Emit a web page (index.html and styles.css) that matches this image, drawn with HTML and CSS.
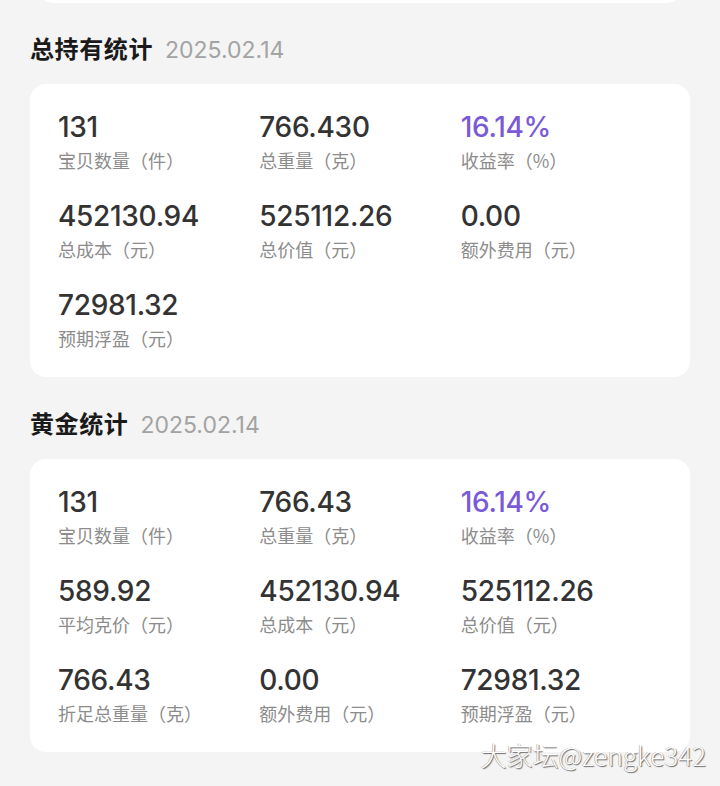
FILE: index.html
```html
<!DOCTYPE html>
<html lang="zh-CN">
<head>
<meta charset="utf-8">
<title>统计</title>
<link rel="stylesheet" href="styles.css">
</head>
<body>
<div class="page">
  <div class="prev-card"></div>

  <section class="section">
    <h2 class="section-title">总持有统计<span class="date">2025.02.14</span></h2>
    <div class="card">
      <div class="grid">
        <div class="cell"><div class="value">131</div><div class="label">宝贝数量（件）</div></div>
        <div class="cell"><div class="value">766.430</div><div class="label">总重量（克）</div></div>
        <div class="cell"><div class="value accent">16.14%</div><div class="label">收益率（%）</div></div>
        <div class="cell"><div class="value">452130.94</div><div class="label">总成本（元）</div></div>
        <div class="cell"><div class="value">525112.26</div><div class="label">总价值（元）</div></div>
        <div class="cell"><div class="value">0.00</div><div class="label">额外费用（元）</div></div>
        <div class="cell"><div class="value">72981.32</div><div class="label">预期浮盈（元）</div></div>
      </div>
    </div>
  </section>

  <section class="section">
    <h2 class="section-title">黄金统计<span class="date">2025.02.14</span></h2>
    <div class="card">
      <div class="grid">
        <div class="cell"><div class="value">131</div><div class="label">宝贝数量（件）</div></div>
        <div class="cell"><div class="value">766.43</div><div class="label">总重量（克）</div></div>
        <div class="cell"><div class="value accent">16.14%</div><div class="label">收益率（%）</div></div>
        <div class="cell"><div class="value">589.92</div><div class="label">平均克价（元）</div></div>
        <div class="cell"><div class="value">452130.94</div><div class="label">总成本（元）</div></div>
        <div class="cell"><div class="value">525112.26</div><div class="label">总价值（元）</div></div>
        <div class="cell"><div class="value">766.43</div><div class="label">折足总重量（克）</div></div>
        <div class="cell"><div class="value">0.00</div><div class="label">额外费用（元）</div></div>
        <div class="cell"><div class="value">72981.32</div><div class="label">预期浮盈（元）</div></div>
      </div>
    </div>
  </section>
</div>
<div class="watermark">大家坛@zengke342</div>
</body>
</html>
```

FILE: styles.css
```css
html, body {
  margin: 0;
  padding: 0;
  background: #f4f4f4;
}
body {
  width: 720px;
  height: 786px;
  overflow: hidden;
  position: relative;
  font-family: Inter, "Noto Sans CJK SC", sans-serif;
}
.page {
  display: flex;
  flex-direction: column;
}
.prev-card {
  height: 40px;
  margin: -37px 37px 0 37px;
  background: #ffffff;
  border-radius: 16px;
}
.section {
  display: flex;
  flex-direction: column;
  margin-top: 30px;
}
.section + .section {
  margin-top: 31px;
}
.section-title {
  display: block;
  margin: 0 0 21px 30px;
  height: 30px;
  font-family: "Noto Sans CJK SC", sans-serif;
  font-size: 24px;
  line-height: 30px;
  font-weight: 700;
  letter-spacing: 0.6px;
  color: #1a1a1a;
  white-space: nowrap;
}
.date {
  font-family: Inter, "Noto Sans CJK SC", sans-serif;
  font-weight: 400;
  font-size: 23px;
  line-height: 20px;
  letter-spacing: 0;
  color: #a3a3a3;
  margin-left: 12px;
}
.card {
  margin: 0 30px;
  background: #ffffff;
  border-radius: 16px;
  padding: 27px 28px 28px 28px;
}
.grid {
  display: grid;
  grid-template-columns: repeat(3, 1fr);
  row-gap: 29px;
}
.cell {
  display: flex;
  flex-direction: column;
}
.value {
  font-family: Inter, "Noto Sans CJK SC", sans-serif;
  font-size: 28px;
  line-height: 32px;
  font-weight: 500;
  color: #333333;
  letter-spacing: -0.3px;
}
.value.accent {
  color: #7a5ad6;
}
.label {
  margin-top: 6px;
  font-family: "Noto Sans CJK SC", sans-serif;
  font-size: 18px;
  line-height: 22px;
  color: #8c8c8c;
}
.watermark {
  position: absolute;
  right: 14px;
  top: 738px;
  font-family: "Noto Sans CJK SC", sans-serif;
  font-weight: 300;
  font-size: 26px;
  line-height: 34px;
  color: #ffffff;
  text-shadow: 1px 1px 1px #6a6a6a, -0.5px -0.5px 0.5px #9a9a9a;
  white-space: nowrap;
}
```
